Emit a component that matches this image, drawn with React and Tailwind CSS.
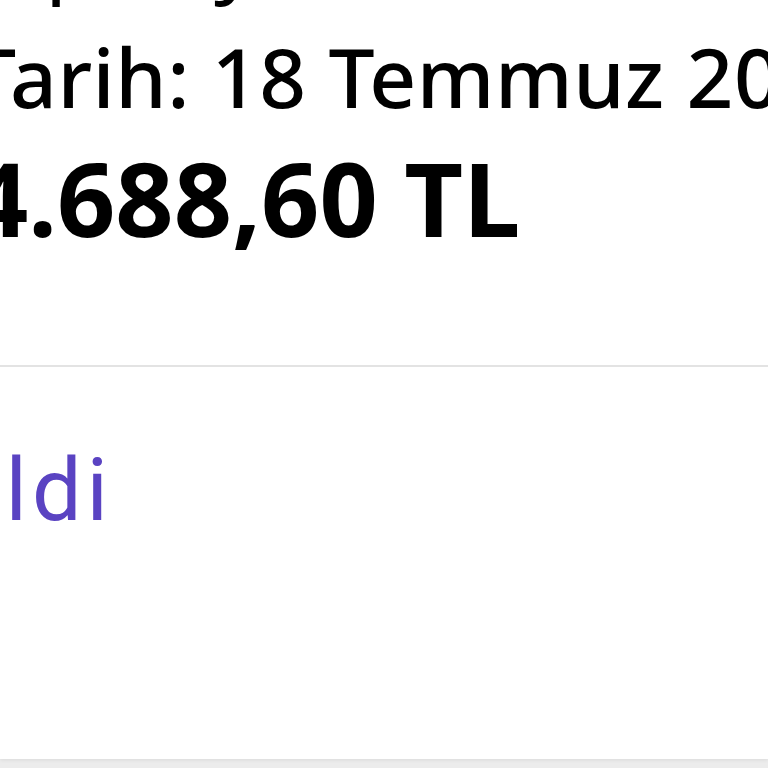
const App = () => {
  return (
    <div className="min-h-screen bg-[#ececec] overflow-hidden">
      <div className="h-[759px] overflow-hidden bg-white shadow-[0_1px_4px_rgba(0,0,0,0.08)]">
        <div className="-ml-[30px] flex flex-col whitespace-nowrap text-black font-['Noto_Sans',sans-serif]">
          <p className="-mt-[87px] text-[84px] leading-none">Alp Soyadı</p>
          <p className="mt-[38px] text-[82px] leading-none font-medium tracking-[0.5px]">Tarih: 18 Temmuz 2023</p>
          <p className="mt-[30px] text-[102px] leading-none font-bold">4.688,60 TL</p>
        </div>
        <div className="mt-[116px] h-[2px] bg-[#e3e3e3]" />
        <div className="mt-[79px] flex w-[113px] justify-end whitespace-nowrap">
          <span className="text-[88px] leading-none tracking-[5px] text-[#5a43c2] font-['Roboto',sans-serif]">
            Teslim edildi
          </span>
        </div>
      </div>
    </div>
  );
};

export default App;
